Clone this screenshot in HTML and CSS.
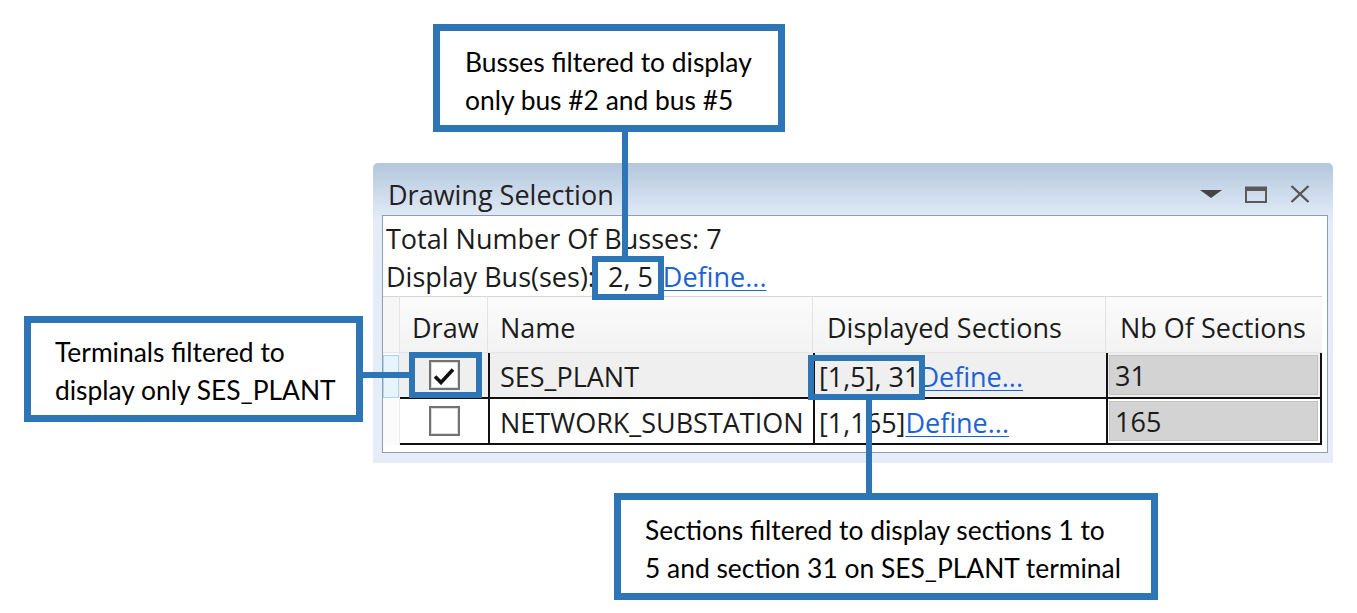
FILE: index.html
```html
<!DOCTYPE html>
<html>
<head>
<meta charset="utf-8">
<title>Drawing Selection</title>
<link rel="stylesheet" href="styles.css">
</head>
<body>
<div class="stage">
  <div class="window">
    <div class="titlebar">
      <span class="title">Drawing Selection</span>
      <div class="controls">
        <svg class="ctl ctl-drop" width="22" height="8" viewBox="0 0 22 8"><polygon points="0,0 22,0 11,8" fill="#444"/></svg>
        <svg class="ctl ctl-max" width="22" height="17" viewBox="0 0 22 17"><rect x="1" y="1.5" width="20" height="14.5" fill="none" stroke="#5a5a5a" stroke-width="2"/><rect x="1" y="1" width="20" height="4" fill="#5a5a5a"/></svg>
        <svg class="ctl ctl-close" width="20" height="18" viewBox="0 0 20 18"><path d="M1.5 1 L18.5 17 M18.5 1 L1.5 17" stroke="#555" stroke-width="2.4" fill="none"/></svg>
      </div>
    </div>
    <div class="panel">
      <div class="info">
        <div class="line">Total Number Of Busses: 7</div>
        <div class="line">Display Bus(ses):<span class="busval">2, 5</span><span class="link">Define...</span></div>
      </div>
      <div class="grid">
        <div class="hcell hrow"></div>
        <div class="hcell">Draw</div>
        <div class="hcell">Name</div>
        <div class="hcell hdisp">Displayed Sections</div>
        <div class="hcell hnb">Nb Of Sections</div>

        <div class="rowhead"><span class="rowsel"></span></div>
        <div class="cell draw sel"><span class="check on"><svg width="22" height="18" viewBox="0 0 22 18"><path d="M2 9.5 L8 15.5 L20 2.5" stroke="#111" stroke-width="3.6" fill="none" stroke-linejoin="miter"/></svg></span></div>
        <div class="cell name sel">SES_PLANT</div>
        <div class="cell disp sel">[1,5], 31<span class="link">Define...</span></div>
        <div class="cell nb sel"><span class="nbbox">31</span></div>

        <div class="rowhead"></div>
        <div class="cell draw"><span class="check"></span></div>
        <div class="cell name">NETWORK_SUBSTATION</div>
        <div class="cell disp">[1,165]<span class="link">Define...</span></div>
        <div class="cell nb"><span class="nbbox">165</span></div>
      </div>
    </div>
  </div>

  <div class="mark mark-bus"></div>
  <div class="mark mark-check"></div>
  <div class="mark mark-sec"></div>

  <div class="wire wire-bus"></div>
  <div class="wire wire-term"></div>
  <div class="wire wire-sec"></div>

  <div class="callout callout-bus">Busses filtered to display<br>only bus #2 and bus #5</div>
  <div class="callout callout-term">Terminals filtered to<br>display only SES_PLANT</div>
  <div class="callout callout-sec">Sections filtered to display sections 1 to<br>5 and section 31 on SES_PLANT terminal</div>
</div>
</body>
</html>
```

FILE: styles.css
```css
html, body {
  margin: 0;
  padding: 0;
  background: #ffffff;
}

.stage {
  position: relative;
  width: 1357px;
  height: 613px;
  overflow: hidden;
  background: #ffffff;
}

/* ---------- window ---------- */
.window {
  position: absolute;
  left: 373px;
  top: 163px;
  width: 960px;
  height: 300px;
  box-sizing: border-box;
  padding: 0 5px 10px 9px;
  border-radius: 5px 5px 0 0;
  background: linear-gradient(180deg, #b4c6dd 0px, #c6d5e8 22px, #dde7f4 48px, #e4ecf7 60px, #e6edf8 100%);
  display: flex;
  flex-direction: column;
  font-family: "Open Sans", "Noto Sans", sans-serif;
  color: #1b1b1b;
}

.titlebar {
  height: 52px;
  box-sizing: border-box;
  padding: 10px 18px 0 6px;
  display: flex;
  align-items: center;
}

.title {
  font-size: 27px;
  color: #222;
}

.controls {
  margin-left: auto;
  display: flex;
  align-items: center;
  gap: 23px;
}

.ctl { display: block; }

.panel {
  flex: 1;
  background: #ffffff;
  border: 1px solid #8c9db4;
  display: flex;
  flex-direction: column;
}

.info {
  padding: 4px 0 0 3px;
  font-size: 27px;
  line-height: 38px;
  white-space: nowrap;
}

.busval {
  margin-left: 13px;
  margin-right: 10px;
}

.link {
  color: #1d62d5;
  text-decoration: underline;
  text-underline-offset: 3px;
  text-decoration-thickness: 1px;
}

/* ---------- grid ---------- */
.grid {
  display: grid;
  grid-template-columns: 17px 88px 325px 293px 216px;
  grid-template-rows: 57px 46px 46px;
  width: 939px;
  font-size: 27px;
}

.hcell {
  box-sizing: border-box;
  border-top: 1px solid #d6d6d6;
  border-right: 1px solid #e3e3e3;
  border-bottom: 1px solid #e6e6e6;
  background: linear-gradient(180deg, #fbfbfb 0%, #f3f3f3 100%);
  display: flex;
  align-items: center;
  padding: 6px 0 0 12px;
  white-space: nowrap;
}

.hrow { padding: 0; background: #f6f6f6; }
.hdisp { padding-left: 14px; }
.hnb { padding-left: 14px; border-right: none; }

.rowhead {
  box-sizing: border-box;
  background: #fbfbfb;
  border-right: 1px solid #ececec;
  padding: 2px 0 1px 0;
  display: flex;
}

.rowsel {
  flex: 1;
  border: 1px solid #a9d7f0;
  background: #e8f4fc;
}

.cell {
  box-sizing: border-box;
  border-bottom: 2px solid #111;
  display: flex;
  align-items: center;
  white-space: nowrap;
  background: #ffffff;
  padding-top: 2px;
}

.cell.sel { background: #efefef; }

.draw { justify-content: center; padding-top: 0; }
.name { border-left: 2px solid #111; padding-left: 10px; }
.disp { border-left: 2px solid #111; padding-left: 4px; }
.nb { border-left: 2px solid #111; border-right: 2px solid #111; padding: 2px 2px 2px 1px; align-items: stretch; }

.nbbox {
  flex: 1;
  background: #d3d3d3;
  border: 1px solid #c3c3c3;
  display: flex;
  align-items: center;
  padding-left: 5px;
}

.check {
  width: 31px;
  height: 30px;
  box-sizing: border-box;
  border: 2px solid #727272;
  background: #fff;
  box-shadow: inset 0 0 0 1px #dcdcdc;
  display: flex;
  align-items: center;
  justify-content: center;
}

.check svg { display: block; margin-top: 1px; }

/* ---------- annotation overlays ---------- */
.mark {
  position: absolute;
  box-sizing: border-box;
  border: 6px solid #2e75b6;
}

.mark-bus { left: 592px; top: 256px; width: 72px; height: 44px; }
.mark-check { left: 409px; top: 352px; width: 73px; height: 46px; }
.mark-sec { left: 808px; top: 355px; width: 117px; height: 45px; }

.wire {
  position: absolute;
  background: #2e75b6;
}

.wire-bus { left: 622px; top: 131px; width: 6px; height: 126px; }
.wire-term { left: 362px; top: 372px; width: 48px; height: 6px; }
.wire-sec { left: 866px; top: 399px; width: 6px; height: 95px; }

.callout {
  position: absolute;
  box-sizing: border-box;
  border: 7px solid #2e75b6;
  background: #ffffff;
  font-family: Lato, "Open Sans", sans-serif;
  font-size: 26.4px;
  line-height: 38px;
  color: #000;
  white-space: nowrap;
}

.callout-bus { left: 433px; top: 24px; width: 352px; height: 108px; padding: 12px 0 0 25px; }
.callout-term { left: 24px; top: 316px; width: 339px; height: 106px; padding: 10px 0 0 24px; }
.callout-sec { left: 614px; top: 493px; width: 544px; height: 107px; padding: 11px 0 0 24px; }
```
